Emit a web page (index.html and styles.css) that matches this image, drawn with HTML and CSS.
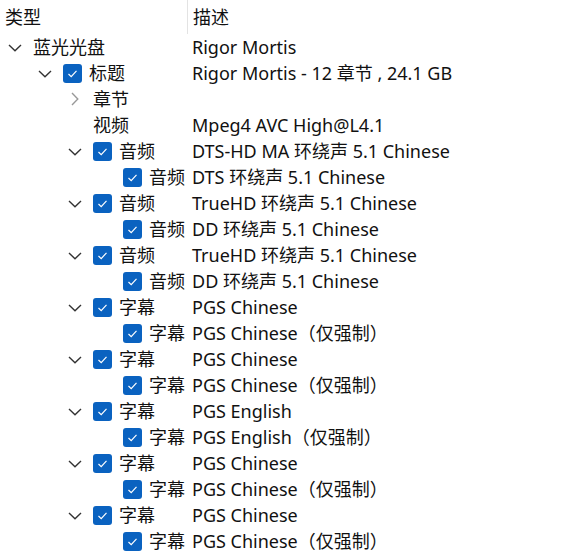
FILE: index.html
```html
<!DOCTYPE html>
<html lang="zh-CN">
<head>
  <meta charset="UTF-8">
  <title>Tree</title>
  <link rel="stylesheet" href="styles.css">
</head>
<body>
  <div class="tree">
    <div class="head">
      <div class="head-cell first">类型</div>
      <div class="head-cell">描述</div>
    </div>

    <div class="row">
      <div class="name lv0"><span class="twisty open"></span><span class="label">蓝光光盘</span></div>
      <div class="desc">Rigor Mortis</div>
    </div>
    <div class="row">
      <div class="name lv1"><span class="twisty open"></span><span class="check"></span><span class="label">标题</span></div>
      <div class="desc">Rigor Mortis - 12 章节 , 24.1 GB</div>
    </div>
    <div class="row">
      <div class="name lv2"><span class="twisty closed"></span><span class="label">章节</span></div>
      <div class="desc"></div>
    </div>
    <div class="row">
      <div class="name lv2"><span class="twisty"></span><span class="label">视频</span></div>
      <div class="desc">Mpeg4 AVC High@L4.1</div>
    </div>
    <div class="row">
      <div class="name lv2"><span class="twisty open"></span><span class="check"></span><span class="label">音频</span></div>
      <div class="desc">DTS-HD MA 环绕声 5.1 Chinese</div>
    </div>
    <div class="row">
      <div class="name lv3"><span class="twisty"></span><span class="check"></span><span class="label">音频</span></div>
      <div class="desc">DTS 环绕声 5.1 Chinese</div>
    </div>
    <div class="row">
      <div class="name lv2"><span class="twisty open"></span><span class="check"></span><span class="label">音频</span></div>
      <div class="desc">TrueHD 环绕声 5.1 Chinese</div>
    </div>
    <div class="row">
      <div class="name lv3"><span class="twisty"></span><span class="check"></span><span class="label">音频</span></div>
      <div class="desc">DD 环绕声 5.1 Chinese</div>
    </div>
    <div class="row">
      <div class="name lv2"><span class="twisty open"></span><span class="check"></span><span class="label">音频</span></div>
      <div class="desc">TrueHD 环绕声 5.1 Chinese</div>
    </div>
    <div class="row">
      <div class="name lv3"><span class="twisty"></span><span class="check"></span><span class="label">音频</span></div>
      <div class="desc">DD 环绕声 5.1 Chinese</div>
    </div>
    <div class="row">
      <div class="name lv2"><span class="twisty open"></span><span class="check"></span><span class="label">字幕</span></div>
      <div class="desc">PGS Chinese</div>
    </div>
    <div class="row">
      <div class="name lv3"><span class="twisty"></span><span class="check"></span><span class="label">字幕</span></div>
      <div class="desc">PGS Chinese（仅强制）</div>
    </div>
    <div class="row">
      <div class="name lv2"><span class="twisty open"></span><span class="check"></span><span class="label">字幕</span></div>
      <div class="desc">PGS Chinese</div>
    </div>
    <div class="row">
      <div class="name lv3"><span class="twisty"></span><span class="check"></span><span class="label">字幕</span></div>
      <div class="desc">PGS Chinese（仅强制）</div>
    </div>
    <div class="row">
      <div class="name lv2"><span class="twisty open"></span><span class="check"></span><span class="label">字幕</span></div>
      <div class="desc">PGS English</div>
    </div>
    <div class="row">
      <div class="name lv3"><span class="twisty"></span><span class="check"></span><span class="label">字幕</span></div>
      <div class="desc">PGS English（仅强制）</div>
    </div>
    <div class="row">
      <div class="name lv2"><span class="twisty open"></span><span class="check"></span><span class="label">字幕</span></div>
      <div class="desc">PGS Chinese</div>
    </div>
    <div class="row">
      <div class="name lv3"><span class="twisty"></span><span class="check"></span><span class="label">字幕</span></div>
      <div class="desc">PGS Chinese（仅强制）</div>
    </div>
    <div class="row">
      <div class="name lv2"><span class="twisty open"></span><span class="check"></span><span class="label">字幕</span></div>
      <div class="desc">PGS Chinese</div>
    </div>
    <div class="row">
      <div class="name lv3"><span class="twisty"></span><span class="check"></span><span class="label">字幕</span></div>
      <div class="desc">PGS Chinese（仅强制）</div>
    </div>
  </div>
</body>
</html>
```

FILE: styles.css
```css
* {
  box-sizing: border-box;
}

body, html {
  margin: 0;
  padding: 0;
  background: #fff;
  font-family: "Noto Sans", "Noto Sans CJK SC", sans-serif;
  font-size: 18px;
  color: #111;
}

.tree {
  width: 582px;
}

.head {
  display: flex;
  height: 34px;
  align-items: stretch;
}

.head-cell {
  line-height: 34px;
  padding-left: 5px;
}

.head-cell.first {
  width: 188px;
  border-right: 1px solid #e3e3e3;
}

.row {
  display: flex;
  height: 26px;
  line-height: 26px;
  white-space: nowrap;
}

.name {
  width: 192px;
  flex-shrink: 0;
  display: flex;
  align-items: center;
  overflow: hidden;
}

.lv1 { padding-left: 30px; }
.lv2 { padding-left: 60px; }
.lv3 { padding-left: 90px; }

.twisty {
  width: 33px;
  height: 26px;
  flex-shrink: 0;
  background-repeat: no-repeat;
}

.twisty.open {
  background-image: url("data:image/svg+xml,%3Csvg xmlns='http://www.w3.org/2000/svg' width='14' height='8'%3E%3Cpolyline points='1,1 7,6.8 13,1' fill='none' stroke='%23333' stroke-width='1.4'/%3E%3C/svg%3E");
  background-position: 8px 10px;
}

.twisty.closed {
  background-image: url("data:image/svg+xml,%3Csvg xmlns='http://www.w3.org/2000/svg' width='8' height='14'%3E%3Cpolyline points='1,1 6.8,7 1,13' fill='none' stroke='%23999' stroke-width='1.4'/%3E%3C/svg%3E");
  background-position: 11px 6px;
}

.check {
  width: 19px;
  height: 19px;
  flex-shrink: 0;
  margin-right: 7px;
  border-radius: 3px;
  background-color: #0a62c0;
  background-image: url("data:image/svg+xml,%3Csvg xmlns='http://www.w3.org/2000/svg' width='19' height='19'%3E%3Cpolyline points='5.5,10 8.2,12.6 13.5,6.8' fill='none' stroke='%23fff' stroke-width='1.2'/%3E%3C/svg%3E");
}

.desc {
  flex: 1;
}
```
